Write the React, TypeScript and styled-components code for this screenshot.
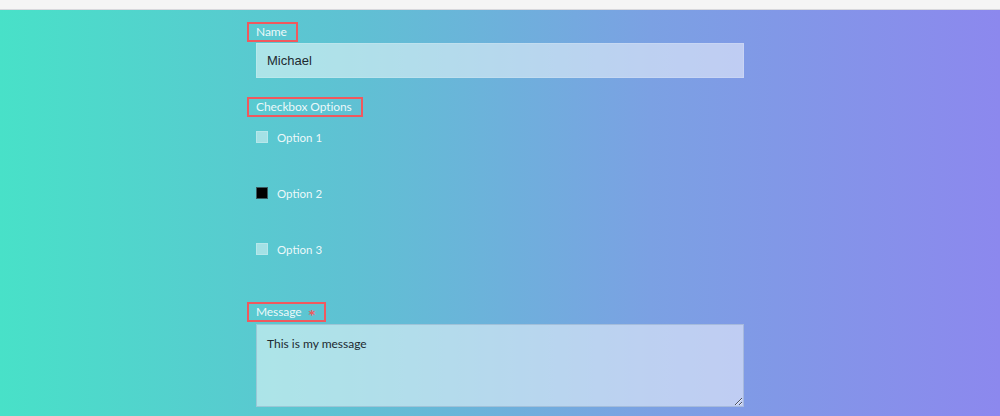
import React, { useState } from 'react';
import styled, { createGlobalStyle } from 'styled-components';

const GlobalStyle = createGlobalStyle`
  html, body {
    margin: 0;
    padding: 0;
  }
  body {
    font-family: 'Lato', 'Open Sans', sans-serif;
    background: #f5f5f5;
  }
`

const TopBar = styled.div`
  height: 9px;
  background: #f5f5f5;
  border-bottom: 1px solid #d8d8dc;
`

const Page = styled.main`
  min-height: 406px;
  background: linear-gradient(90deg, #48e1c8 0%, #5fc1d3 35%, #7ba1e3 65%, #8c88ee 100%);
  padding-top: 12px;
  box-sizing: border-box;
`

const Form = styled.form`
  width: 488px;
  margin: 0 auto;
  display: flex;
  flex-direction: column;
`

const Field = styled.div<{ gap?: number }>`
  display: flex;
  flex-direction: column;
  align-items: flex-start;
  margin-bottom: ${({ gap }) => gap ?? 0}px;
`

const Label = styled.label`
  display: inline-flex;
  align-items: center;
  margin-left: -9px;
  padding: 0 9px 0 7px;
  height: 16px;
  border: 2px solid #f0595e;
  color: rgba(255, 255, 255, 0.9);
  font-size: 12px;
  letter-spacing: -0.1px;
  line-height: 16px;
`

const Required = styled.span`
  color: #f0595e;
  margin-left: 7px;
  font-family: 'DejaVu Sans', sans-serif;
  font-size: 13px;
  font-weight: 700;
  line-height: 10px;
  position: relative;
  top: 3px;
`

const TextInput = styled.input`
  box-sizing: border-box;
  width: 100%;
  height: 35px;
  margin-top: 1px;
  padding: 0 10px;
  border: 1px solid rgba(255, 255, 255, 0.15);
  background: rgba(255, 255, 255, 0.5);
  font-family: 'Liberation Sans', Arial, sans-serif;
  font-size: 13px;
  color: #1d2a30;
  outline: none;
`

const Options = styled.div`
  display: flex;
  flex-direction: column;
  gap: 44px;
  margin-top: 14px;
`

const Option = styled.label`
  display: flex;
  align-items: center;
  gap: 9px;
  height: 12px;
  color: rgba(255, 255, 255, 0.9);
  font-size: 11.5px;
  cursor: pointer;
`

const Box = styled.span<{ checked: boolean }>`
  width: 12px;
  height: 12px;
  box-sizing: border-box;
  background: ${({ checked }) => (checked ? '#000' : 'rgba(255, 255, 255, 0.45)')};
  border: 1px solid ${({ checked }) => (checked ? '#3a5a60' : 'rgba(255, 255, 255, 0.2)')};
`

const TextArea = styled.textarea`
  box-sizing: border-box;
  width: 100%;
  height: 83px;
  margin-top: 2px;
  padding: 11px 10px;
  border: 1px solid rgba(120, 150, 180, 0.35);
  background: rgba(255, 255, 255, 0.5);
  font-family: 'Lato', 'Open Sans', sans-serif;
  font-size: 12px;
  color: #1d2a30;
  outline: none;
`

const options = ['Option 1', 'Option 2', 'Option 3']

const App = () => {
  const [checked, setChecked] = useState<string[]>(['Option 2'])

  const toggle = (name: string) => {
    setChecked(c => (c.includes(name) ? c.filter(x => x !== name) : [...c, name]))
  }

  return (
    <>
      <GlobalStyle />
      <TopBar />
      <Page>
        <Form onSubmit={e => e.preventDefault()}>
          <Field gap={19}>
            <Label htmlFor="name">Name</Label>
            <TextInput id="name" defaultValue="Michael" />
          </Field>
          <Field gap={47}>
            <Label>Checkbox Options</Label>
            <Options>
              {options.map(o => (
                <Option key={o} onClick={() => toggle(o)}>
                  <Box checked={checked.includes(o)} />
                  {o}
                </Option>
              ))}
            </Options>
          </Field>
          <Field>
            <Label htmlFor="message">
              Message<Required>*</Required>
            </Label>
            <TextArea id="message" defaultValue="This is my message" />
          </Field>
        </Form>
      </Page>
    </>
  )
}

export default App;
